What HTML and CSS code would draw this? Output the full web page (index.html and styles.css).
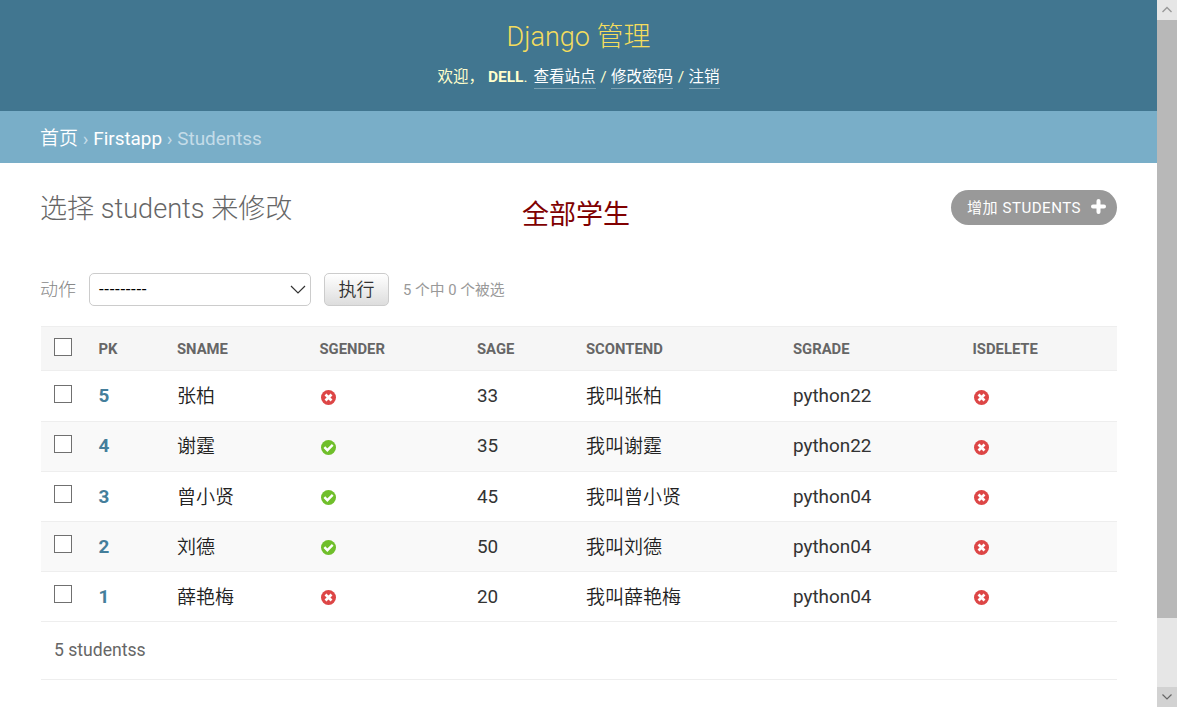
FILE: index.html
```html
<!DOCTYPE html>
<html lang="zh-CN">
<head>
<meta charset="utf-8">
<title>选择 students 来修改 | Django 管理</title>
<link rel="stylesheet" href="styles.css">
</head>
<body>
<svg class="defs" width="0" height="0">
  <symbol id="no" viewBox="0 0 16 16"><circle cx="8" cy="8" r="8" fill="#dd4646"/><path d="M4.800 4.800l6.400 6.400M11.200 4.800l-6.400 6.400" stroke="#fff" stroke-width="2.9"/></symbol>
  <symbol id="yes" viewBox="0 0 16 16"><circle cx="8" cy="8" r="8" fill="#70bf2b"/><path d="M3.600 7.600l3.200 3.300 5.700-5.600" fill="none" stroke="#fff" stroke-width="2.600"/></symbol>
</svg>
<div class="window">
  <div class="page">
    <header class="header">
      <h1 class="brand">Django 管理</h1>
      <div class="user-tools"><span>欢迎，</span><strong>DELL</strong><span class="dot">.</span><a>查看站点</a><span class="slash">/</span><a>修改密码</a><span class="slash">/</span><a>注销</a></div>
    </header>
    <nav class="breadcrumbs"><a class="home">首页</a><span class="sep">›</span><a>Firstapp</a><span class="sep">›</span><span>Studentss</span></nav>
    <main class="content">
      <div class="title-row">
        <h2 class="title">选择 students 来修改</h2>
        <div class="center-title">全部学生</div>
        <a class="add"><span>增加 STUDENTS</span><svg width="15" height="15" viewBox="0 0 15 15"><path d="M7.500 2v11M2 7.500h11" stroke="#fff" stroke-width="4" stroke-linecap="round"/></svg></a>
      </div>
      <div class="actions">
        <span class="label">动作</span>
        <div class="select"><span>---------</span><svg width="16" height="10" viewBox="0 0 16 10"><path d="M1 1l7 7 7-7" fill="none" stroke="#333" stroke-width="1.2"/></svg></div>
        <button class="go">执行</button>
        <span class="counter">5 个中 0 个被选</span>
      </div>
      <div class="table">
        <div class="row head"><i class="check"></i><span>PK</span><span>SNAME</span><span>SGENDER</span><span>SAGE</span><span>SCONTEND</span><span>SGRADE</span><span>ISDELETE</span></div>
        <div class="row first"><i class="check"></i><b>5</b><span class="zh">张柏</span><svg class="icon"><use href="#no"/></svg><span>33</span><span class="zh">我叫张柏</span><span>python22</span><svg class="icon"><use href="#no"/></svg></div>
        <div class="row alt second"><i class="check"></i><b>4</b><span class="zh">谢霆</span><svg class="icon"><use href="#yes"/></svg><span>35</span><span class="zh">我叫谢霆</span><span>python22</span><svg class="icon"><use href="#no"/></svg></div>
        <div class="row"><i class="check"></i><b>3</b><span class="zh">曾小贤</span><svg class="icon"><use href="#yes"/></svg><span>45</span><span class="zh">我叫曾小贤</span><span>python04</span><svg class="icon"><use href="#no"/></svg></div>
        <div class="row alt"><i class="check"></i><b>2</b><span class="zh">刘德</span><svg class="icon"><use href="#yes"/></svg><span>50</span><span class="zh">我叫刘德</span><span>python04</span><svg class="icon"><use href="#no"/></svg></div>
        <div class="row"><i class="check"></i><b>1</b><span class="zh">薛艳梅</span><svg class="icon"><use href="#no"/></svg><span>20</span><span class="zh">我叫薛艳梅</span><span>python04</span><svg class="icon"><use href="#no"/></svg></div>
      </div>
      <div class="paginator">5 studentss</div>
    </main>
  </div>
  <div class="scrollbar">
    <div class="arrow up"><svg width="12" height="8" viewBox="0 0 12 8"><path d="M1.500 6L6 1.500 10.500 6" fill="none" stroke="#999" stroke-width="1.400"/></svg></div>
    <div class="thumb"></div>
    <div class="arrow down"><svg width="12" height="8" viewBox="0 0 12 8"><path d="M1.500 1.500L6 6l4.500-4.500" fill="none" stroke="#666" stroke-width="1.200"/></svg></div>
  </div>
</div>
</body>
</html>
```
FILE: styles.css
```css
* { box-sizing: border-box; }
body { margin: 0; font-family: Roboto, "Noto Sans CJK SC", sans-serif; color: #333; background: #fff; }
.defs { position: absolute; }
.window { display: flex; width: 1177px; height: 707px; overflow: hidden; }
.page { width: 1157px; }
.header { height: 111px; padding-top: 19px; background: #417690; color: #ffc; display: flex; flex-direction: column; align-items: center; }
.brand { margin: 0; font-size: 27px; line-height: 36px; font-weight: 300; color: #f5dd5d; white-space: nowrap; }
.user-tools { display: flex; margin-top: 11px; font-size: 15.500px; line-height: 22px; white-space: nowrap; }
.user-tools strong { margin-left: 4px; font-size: 15.500px; }
.user-tools a { color: #fff; height: 23px; border-bottom: 1px solid #7a9fb1; }
.dot { margin-right: 6px; }
.slash { width: 15.500px; text-align: center; }
.breadcrumbs { display: flex; height: 52px; padding: 3px 0 0 40px; line-height: 50px; font-size: 18.900px; background: #79aec8; color: #c4dce8; white-space: nowrap; }
.breadcrumbs a { color: #fff; }
.breadcrumbs .home { font-size: 19px; font-weight: 350; }
.sep { width: 15.200px; text-align: center; }
.content { padding: 27px 40px 0 41px; }
.title-row { display: grid; grid-template-columns: 481px 429px 166px; height: 83px; align-items: start; white-space: nowrap; }
.title { margin: 1px 0 0 -1px; font-size: 27.100px; line-height: 36px; font-weight: 300; color: #666; }
.center-title { font-size: 27px; line-height: 36px; padding-top: 7px; color: maroon; }
.add { display: flex; align-items: center; justify-content: space-between; height: 35px; padding: 0 11px 2px 16px; border-radius: 18px; background: #999; color: #fff; font-size: 15.100px; letter-spacing: .5px; }
.add span { margin-top: -2px; }
.actions { display: flex; align-items: center; height: 33px; font-size: 18px; color: #999; font-weight: 300; white-space: nowrap; }
.label { width: 48px; margin: -4px 0 0 -1px; color: #888; }
.select { display: flex; align-items: center; justify-content: space-between; width: 222px; height: 33px; margin-left: 1px; padding: 0 4px 0 9px; border: 1px solid #ccc; border-radius: 5px; background: #fff; color: #000; font-size: 17px; font-weight: 400; letter-spacing: .65px; }
.select span { margin-top: -1px; }
.go { width: 65px; height: 33px; margin-left: 13px; padding: 0 0 3px; border: 1px solid #ccc; border-radius: 5px; background: linear-gradient(#fff, #ddd); color: #333; font: 350 18px Roboto, "Noto Sans CJK SC", sans-serif; }
.counter { margin: -2px 0 0 14px; font-size: 14.800px; font-weight: 400; }
.table { margin-top: 20px; }
.row { display: grid; grid-template-columns: 57px 78px 143px 157px 109px 207px 180px 1fr; height: 50px; align-items: center; border-bottom: 1px solid #eee; font-size: 18.900px; white-space: nowrap; }
.row > span { padding-left: 1px; }
.row > span:nth-child(2), .row > b { padding-left: .5px; }
.row.head { height: 45px; border-top: 1px solid #eee; background: #f6f6f6; color: #666; font-size: 14.800px; font-weight: 700; }
.head > span:nth-child(4), .head > span:nth-child(8) { padding-left: .5px; }
.row.first { height: 51px; }
.row.first > *, .row.second > * { margin-top: -2px; }
.row.alt { background: #f9f9f9; }
.row b { color: #447e9b; }
.row > .zh { font-size: 19px; font-weight: 350; margin-top: -3px; color: #222; }
.row.second > .zh { margin-top: -5px; }
.row > .check { width: 18px; height: 18px; margin: -5px 0 0 13px; border: 1px solid #707070; background: #fff; }
.head > .check { margin-top: -3px; }
.row > .icon { width: 15px; height: 15px; margin: 2px 0 0 1.500px; }
.paginator { height: 58px; padding-left: 13px; border-bottom: 1px solid #eee; line-height: 56px; font-size: 17.600px; color: #666; }
.scrollbar { display: flex; flex-direction: column; width: 20px; background: #e6e6e6; }
.arrow { display: flex; align-items: center; justify-content: center; height: 20px; }
.thumb { height: 598px; margin-bottom: auto; background: #b8b8b8; }
.down { background: #d2d2d2; }
```
